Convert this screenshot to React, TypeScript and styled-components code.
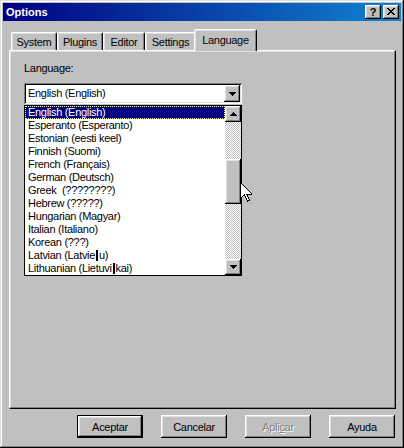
import React from 'react';
import styled, { createGlobalStyle, css } from 'styled-components';

const Global = createGlobalStyle`
  html, body { margin: 0; padding: 0; background: #c0c0c0; }
  body { font-family: "Liberation Sans", Arial, sans-serif; font-size: 11px; }
`;

const FONT = `"Liberation Sans", Arial, sans-serif`;

const raised = css`
  box-shadow: inset -1px -1px #000, inset 1px 1px #fff, inset -2px -2px #808080, inset 2px 2px #dfdfdf;
`;

const Window = styled.div`
  position: relative;
  box-sizing: border-box;
  width: 404px;
  height: 448px;
  padding: 3px;
  background: #c0c0c0;
  box-shadow: inset -1px -1px #000, inset 1px 1px #dfdfdf, inset -2px -2px #808080, inset 2px 2px #fff;
  display: flex;
  flex-direction: column;
  font-family: ${FONT};
  font-size: 11px;
  color: #000;
`;

const TitleBar = styled.div`
  height: 18px;
  display: flex;
  align-items: center;
  justify-content: space-between;
  padding: 0 2px 0 3px;
  background: linear-gradient(90deg, #000080 0%, #1084d0 100%);
  color: #fff;
  font-weight: bold;
  font-size: 11px;
`;

const TitleText = styled.span`
  line-height: 18px;
`;

const TitleButtons = styled.div`
  display: flex;
  gap: 2px;
`;

const TitleButton = styled.div`
  box-sizing: border-box;
  width: 16px;
  height: 14px;
  background: #c0c0c0;
  ${raised};
  display: flex;
  align-items: center;
  justify-content: center;
  color: #000;
  font-weight: bold;
  font-size: 11px;
  line-height: 14px;
  padding-bottom: 1px;
`;

const Body = styled.div`
  display: flex;
  flex-direction: column;
  padding: 8px 5px 0 6px;
  letter-spacing: -0.3px;
`;

const TabRow = styled.div`
  display: flex;
  align-items: flex-end;
  height: 21px;
  padding-left: 2px;
`;

const Tab = styled.div<{ $active?: boolean; $w: number }>`
  box-sizing: border-box;
  width: ${(p) => p.$w}px;
  height: 18px;
  display: flex;
  align-items: center;
  justify-content: center;
  background: #c0c0c0;
  border-top: 1px solid #fff;
  border-left: 1px solid #fff;
  border-right: 1px solid #000;
  border-radius: 2px 2px 0 0;
  box-shadow: inset -1px 0 #808080, inset 1px 1px #dfdfdf;
  ${(p) =>
    p.$active &&
    css`
      height: 22px;
      margin: 0 -2px -1px -2px;
      position: relative;
      z-index: 1;
      padding-bottom: 2px;
    `}
`;

const Panel = styled.div`
  box-sizing: border-box;
  height: 359px;
  border-top: 1px solid #fff;
  border-left: 1px solid #fff;
  border-right: 1px solid #000;
  border-bottom: 1px solid #000;
  box-shadow: inset -1px -1px #808080, inset 1px 1px #dfdfdf;
  padding: 11px 14px;
`;

const Label = styled.div`
  line-height: 13px;
  margin-bottom: 8px;
`;

const ComboWrap = styled.div`
  position: relative;
  width: 218px;
`;

const Combo = styled.div`
  box-sizing: border-box;
  height: 21px;
  padding: 2px;
  background: #fff;
  box-shadow: inset 1px 1px #808080, inset -1px -1px #fff, inset 2px 2px #000, inset -2px -2px #dfdfdf;
  display: flex;
  align-items: stretch;
`;

const ComboText = styled.div`
  flex: 1;
  padding-left: 2px;
  line-height: 17px;
`;

const ArrowButton = styled.div<{ $h?: number }>`
  box-sizing: border-box;
  width: 16px;
  height: ${(p) => (p.$h ? `${p.$h}px` : 'auto')};
  flex-shrink: 0;
  background: #c0c0c0;
  ${raised};
  display: flex;
  align-items: center;
  justify-content: center;
`;

const DropList = styled.div`
  position: absolute;
  left: 0;
  top: 22px;
  box-sizing: border-box;
  width: 218px;
  border: 1px solid #000;
  background: #fff;
  display: flex;
`;

const Items = styled.div`
  flex: 1;
  display: flex;
  flex-direction: column;
`;

const Item = styled.div<{ $selected?: boolean }>`
  height: 13px;
  line-height: 13px;
  padding-left: 3px;
  white-space: pre;
  ${(p) =>
    p.$selected &&
    css`
      background: #000080;
      color: #fff;
      outline: 1px dotted #ffff80;
      outline-offset: -1px;
    `}
`;

const Missing = styled.span`
  display: inline-block;
  width: 2px;
  height: 11px;
  background: #000;
  vertical-align: -2px;
  margin: 0 1px;
`;

const ScrollBar = styled.div`
  width: 16px;
  display: flex;
  flex-direction: column;
`;

const Track = styled.div`
  flex: 1;
  display: flex;
  flex-direction: column;
  background-color: #fff;
  background-image: repeating-conic-gradient(#c0c0c0 0 25%, #ffffff 0 50%);
  background-size: 2px 2px;
`;

const Thumb = styled.div`
  box-sizing: border-box;
  margin-top: 37px;
  height: 45px;
  background: #c0c0c0;
  ${raised};
`;

const ButtonRow = styled.div`
  display: flex;
  justify-content: flex-end;
  gap: 18px;
  margin-top: 6px;
  padding-right: 1px;
`;

const Button = styled.div<{ $default?: boolean; $disabled?: boolean }>`
  box-sizing: border-box;
  width: 66px;
  height: 23px;
  display: flex;
  align-items: center;
  justify-content: center;
  background: #c0c0c0;
  ${raised};
  ${(p) =>
    p.$default &&
    css`
      box-shadow: inset 0 0 0 1px #000, inset -2px -2px #000, inset 2px 2px #fff, inset -3px -3px #808080,
        inset 3px 3px #dfdfdf;
    `}
  ${(p) =>
    p.$disabled &&
    css`
      color: #808080;
      text-shadow: 1px 1px #fff;
    `}
`;

const Under = styled.span`
  text-decoration: underline;
`;

const Cursor = styled.svg`
  position: absolute;
  left: 240px;
  top: 182px;
`;

const Down = () => (
  <svg width="7" height="4" viewBox="0 0 7 4" shapeRendering="crispEdges">
    <path d="M0 0h7v1h-1v1h-1v1h-1v1h-1v-1h-1v-1h-1v-1h-1z" fill="#000" />
  </svg>
);

const Up = () => (
  <svg width="7" height="4" viewBox="0 0 7 4" shapeRendering="crispEdges">
    <path d="M3 0h1v1h1v1h1v1h1v1h-7v-1h1v-1h1v-1h1z" fill="#000" />
  </svg>
);

const CloseIcon = () => (
  <svg width="8" height="7" viewBox="0 0 8 7" shapeRendering="crispEdges">
    <path
      d="M0 0h2v1h1v1h2v-1h1v-1h2v1h-1v1h-1v1h-1v1h1v1h1v1h1v1h-2v-1h-1v-1h-2v1h-1v1h-2v-1h1v-1h1v-1h1v-1h-1v-1h-1v-1h-1z"
      fill="#000"
    />
  </svg>
);

type Lang = { key: string; content: React.ReactNode };

const languages: Lang[] = [
  { key: 'en', content: 'English (English)' },
  { key: 'eo', content: 'Esperanto (Esperanto)' },
  { key: 'et', content: 'Estonian (eesti keel)' },
  { key: 'fi', content: 'Finnish (Suomi)' },
  { key: 'fr', content: 'French (Français)' },
  { key: 'de', content: 'German (Deutsch)' },
  { key: 'el', content: 'Greek  (????????)' },
  { key: 'he', content: 'Hebrew (?????)' },
  { key: 'hu', content: 'Hungarian (Magyar)' },
  { key: 'it', content: 'Italian (Italiano)' },
  { key: 'ko', content: 'Korean (???)' },
  {
    key: 'lv',
    content: (
      <>
        Latvian (Latvie<Missing />u)
      </>
    ),
  },
  {
    key: 'lt',
    content: (
      <>
        Lithuanian (Lietuvi<Missing />kai)
      </>
    ),
  },
];

const tabs = [
  { label: 'System', w: 46 },
  { label: 'Plugins', w: 46 },
  { label: 'Editor', w: 42 },
  { label: 'Settings', w: 51 },
  { label: 'Language', w: 63, active: true },
];

export default function App() {
  return (
    <>
      <Global />
      <Window>
        <TitleBar>
          <TitleText>Options</TitleText>
          <TitleButtons>
            <TitleButton>?</TitleButton>
            <TitleButton>
              <CloseIcon />
            </TitleButton>
          </TitleButtons>
        </TitleBar>
        <Body>
          <TabRow>
            {tabs.map((t) => (
              <Tab key={t.label} $w={t.w} $active={t.active}>
                {t.label}
              </Tab>
            ))}
          </TabRow>
          <Panel>
            <Label>Language:</Label>
            <ComboWrap>
              <Combo>
                <ComboText>English (English)</ComboText>
                <ArrowButton>
                  <Down />
                </ArrowButton>
              </Combo>
              <DropList>
                <Items>
                  {languages.map((l, i) => (
                    <Item key={l.key} $selected={i === 0}>
                      {l.content}
                    </Item>
                  ))}
                </Items>
                <ScrollBar>
                  <ArrowButton $h={16}>
                    <Up />
                  </ArrowButton>
                  <Track>
                    <Thumb />
                  </Track>
                  <ArrowButton $h={16}>
                    <Down />
                  </ArrowButton>
                </ScrollBar>
              </DropList>
            </ComboWrap>
          </Panel>
          <ButtonRow>
            <Button $default>Aceptar</Button>
            <Button>Cancelar</Button>
            <Button $disabled>
              Apli<Under>c</Under>ar
            </Button>
            <Button>Ayuda</Button>
          </ButtonRow>
        </Body>
        <Cursor width="12" height="20" viewBox="0 0 12 20" shapeRendering="crispEdges">
          <path d="M0.5 0.5v16l4-4 3 6.5 2-1-3-6h5.5z" fill="#fff" stroke="#000" strokeWidth="1" />
        </Cursor>
      </Window>
    </>
  );
}
